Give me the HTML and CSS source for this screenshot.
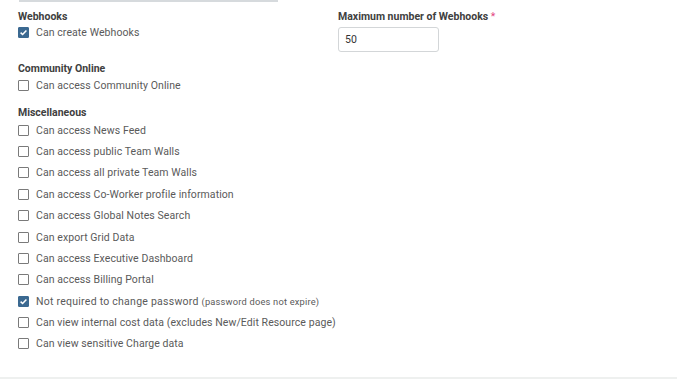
FILE: index.html
```html
<!DOCTYPE html>
<html>
<head>
<meta charset="utf-8">
<link rel="stylesheet" href="styles.css">
</head>
<body>
<div class="page">
  <div class="topline"></div>
  <div class="content">
    <div class="section two-col">
      <div class="col">
        <div class="heading">Webhooks</div>
        <div class="row first"><span class="cb checked"><svg viewBox="0 0 11 11" width="11" height="11"><path d="M2.6 5.6 L4.6 7.5 L8.4 3.4" fill="none" stroke="#fff" stroke-width="1.5"/></svg></span><span class="lbl">Can create Webhooks</span></div>
      </div>
      <div class="col right">
        <div class="heading">Maximum number of Webhooks <span class="req">*</span></div>
        <div class="input">50</div>
      </div>
    </div>
    <div class="section">
      <div class="heading">Community Online</div>
      <div class="row"><span class="cb"></span><span class="lbl">Can access Community Online</span></div>
    </div>
    <div class="section">
      <div class="heading">Miscellaneous</div>
      <div class="row"><span class="cb"></span><span class="lbl">Can access News Feed</span></div>
      <div class="row"><span class="cb"></span><span class="lbl">Can access public Team Walls</span></div>
      <div class="row"><span class="cb"></span><span class="lbl">Can access all private Team Walls</span></div>
      <div class="row"><span class="cb"></span><span class="lbl">Can access Co-Worker profile information</span></div>
      <div class="row"><span class="cb"></span><span class="lbl">Can access Global Notes Search</span></div>
      <div class="row"><span class="cb"></span><span class="lbl">Can export Grid Data</span></div>
      <div class="row"><span class="cb"></span><span class="lbl">Can access Executive Dashboard</span></div>
      <div class="row"><span class="cb"></span><span class="lbl">Can access Billing Portal</span></div>
      <div class="row"><span class="cb checked"><svg viewBox="0 0 11 11" width="11" height="11"><path d="M2.6 5.6 L4.6 7.5 L8.4 3.4" fill="none" stroke="#fff" stroke-width="1.5"/></svg></span><span class="lbl wide">Not required to change password <span class="small">(password does not expire)</span></span></div>
      <div class="row"><span class="cb"></span><span class="lbl">Can view internal cost data (excludes New/Edit Resource page)</span></div>
      <div class="row"><span class="cb"></span><span class="lbl">Can view sensitive Charge data</span></div>
    </div>
  </div>
  <div class="footer"></div>
</div>
</body>
</html>
```
FILE: styles.css
```css
html, body {
  margin: 0;
  padding: 0;
  background: #ffffff;
}
body {
  font-family: Roboto, "Liberation Sans", sans-serif;
  color: #555;
}
.page {
  display: flex;
  flex-direction: column;
  min-height: 100vh;
  height: 379px;
  box-sizing: border-box;
}
.topline {
  margin-left: 19px;
  width: 259px;
  height: 2px;
  background: #d6dadd;
}
.content {
  padding: 9px 0 0 18px;
}
.section {
  margin-bottom: 11px;
}
.two-col {
  display: grid;
  grid-template-columns: 320px auto;
}
.heading {
  font-size: 10.5px;
  line-height: 12px;
  font-weight: 700;
  color: #404040;
}
.req {
  color: #e2457f;
  font-weight: 400;
}
.row {
  display: flex;
  align-items: center;
  height: 21.4px;
  font-size: 10.5px;
  letter-spacing: 0.08px;
}
.row.first {
  height: 19.4px;
}
.cb {
  width: 11px;
  height: 11px;
  box-sizing: border-box;
  border: 1px solid #7a7a7a;
  border-radius: 1px;
  margin-right: 7px;
  display: flex;
  flex-shrink: 0;
}
.cb.checked {
  background: #3b6991;
  border-color: #3b6991;
}
.cb svg {
  margin: -1px;
}
.lbl {
  color: #5a5a5a;
}
.lbl.wide {
  letter-spacing: 0.25px;
}
.small {
  font-size: 9.3px;
  letter-spacing: 0.2px;
}
.input {
  margin-top: 4px;
  width: 101px;
  height: 25px;
  box-sizing: border-box;
  border: 1px solid #d3d6d8;
  border-radius: 3px;
  padding: 0 6px;
  font-size: 10.5px;
  line-height: 23px;
  color: #333;
}
.footer {
  margin-top: auto;
  height: 2px;
  background: #eef0ef;
}
```
